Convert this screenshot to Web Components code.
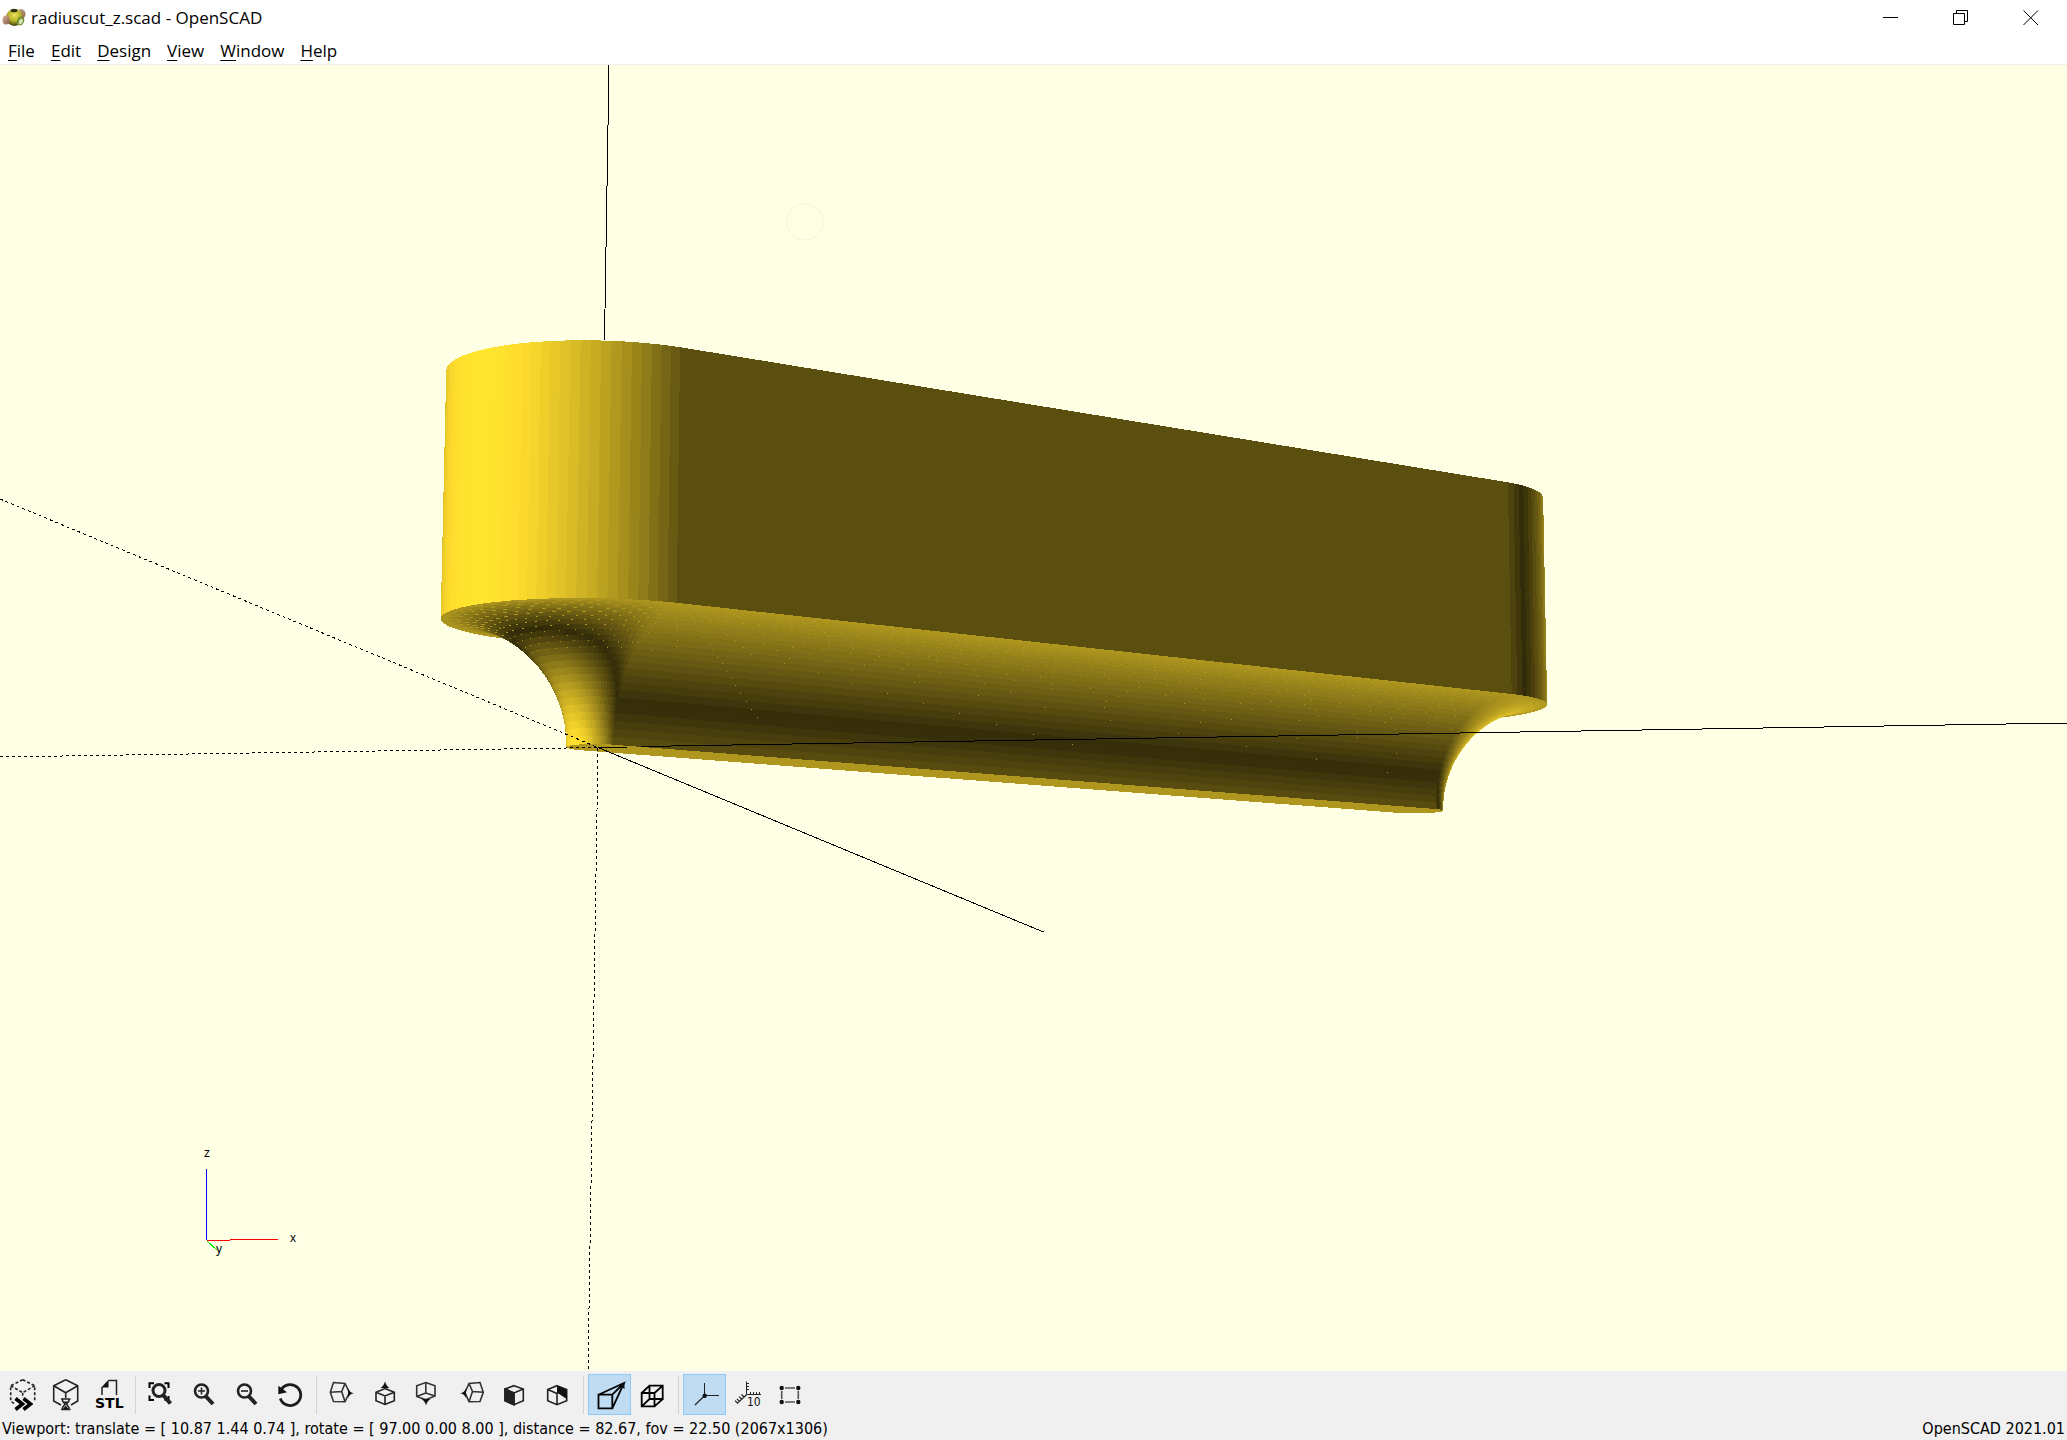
<!DOCTYPE html>
<html lang="en">
<head>
<meta charset="utf-8">
<title>radiuscut_z.scad - OpenSCAD</title>
<style>
html, body { margin: 0; height: 100%; overflow: hidden; background: #fff; }
</style>
</head>
<body>
<scad-window></scad-window>

<template id="t-window">
<style>
:host { display: flex; flex-direction: column; height: 100%; background: #fff; color: #000; }
scad-viewport { flex: 1 1 0; min-height: 0; }
</style>
<title-bar>radiuscut_z.scad - OpenSCAD</title-bar>
<menu-bar></menu-bar>
<scad-viewport></scad-viewport>
<tool-bar></tool-bar>
<status-bar>Viewport: translate = [ 10.87 1.44 0.74 ], rotate = [ 97.00 0.00 8.00 ], distance = 82.67, fov = 22.50 (2067x1306)<span slot="end">OpenSCAD 2021.01</span></status-bar>
</template>

<template id="t-title">
<style>
:host { display: flex; align-items: center; height: 35px; font: 17px/24px "Open Sans", "Noto Sans", sans-serif; }
.logo { width: 24px; height: 22px; margin: 0 5px 0 2px; }
.name { flex: 1; }
.ctl { display: flex; padding-right: 1px; }
button { width: 70px; height: 34px; border: 0; padding: 0; background: none; display: grid; place-items: center; }
button svg { width: 16px; height: 16px; fill: none; stroke: #000; }
</style>
<svg class="logo" viewBox="0 0 24 22" aria-hidden="true">
  <defs>
    <radialGradient id="b" cx=".5" cy=".35" r=".65"><stop offset="0" stop-color="#e6e25a"/><stop offset=".55" stop-color="#b9b42c"/><stop offset="1" stop-color="#3c3c10"/></radialGradient>
    <linearGradient id="p" x2="1" y2="1"><stop offset="0" stop-color="#d8b49c"/><stop offset="1" stop-color="#8a5f4c"/></linearGradient>
  </defs>
  <ellipse cx="19" cy="7" rx="4.500" ry="5" fill="url(#p)"/>
  <circle cx="12.500" cy="10.500" r="8.500" fill="url(#b)"/>
  <ellipse cx="12" cy="3.500" rx="3.500" ry="1.800" fill="#2f350f"/>
  <ellipse cx="18.500" cy="14" rx="3.500" ry="4.500" fill="#6f9136" transform="rotate(25 18.500 14)"/>
  <ellipse cx="18.800" cy="14.500" rx="1.800" ry="2.800" fill="#dce6b0" transform="rotate(25 18.800 14.500)"/>
  <ellipse cx="4" cy="13" rx="3.500" ry="4.500" fill="url(#p)"/>
</svg>
<span class="name"><slot></slot></span>
<div class="ctl">
  <button aria-label="Minimize"><svg viewBox="0 0 16 16"><path d="M0 7.500H15"/></svg></button>
  <button aria-label="Restore"><svg viewBox="0 0 16 16"><path d="M.5 3.500H11.500V14.500H.5ZM3.500 3.500V.5H14.500V11.500H11.500"/></svg></button>
  <button aria-label="Close"><svg viewBox="0 0 16 16"><path d="M.5.5L15 15M15 .5L.5 15"/></svg></button>
</div>
</template>

<template id="t-menu">
<style>
:host { display: flex; height: 29px; border-bottom: 1px solid #f0f0f0; font: 17px/32px "Open Sans", "Noto Sans", sans-serif; }
nav { display: flex; }
button { border: 0; background: none; padding: 0 8px; font: inherit; line-height: 32px; height: 32px; color: inherit; }
u { text-underline-offset: 3px; text-decoration-thickness: 1px; }
</style>
<nav>
  <button><u>F</u>ile</button><button><u>E</u>dit</button><button><u>D</u>esign</button><button><u>V</u>iew</button><button><u>W</u>indow</button><button><u>H</u>elp</button>
</nav>
</template>

<template id="t-viewport">
<style>
:host { display: block; background: #ffffe5; overflow: hidden; }
svg { display: block; width: 100%; height: 100%; }
.axis { stroke: #000; stroke-width: 1; fill: none; }
.neg { stroke-dasharray: 3 3; }
text { font: 12px "Liberation Sans", sans-serif; }
</style>
<svg viewBox="0 65 2067 1306" preserveAspectRatio="xMidYMid slice" shape-rendering="crispEdges" role="img" aria-label="3D view">
  <circle cx="805" cy="222" r="18" fill="none" stroke="#f4f4da" shape-rendering="auto"/>
  <g id="model"></g>
  <path class="axis" d="M609 65L604.500 340M598 747.500L627 747.400M641 746.500L2067 723M598 747.500L1043.500 932"/>
  <path class="axis neg" d="M0 757L598 747.500M0 499L598 747.500M598 748L588 1371"/>
  <g fill="none">
    <path stroke="#00f" d="M206.500 1240V1169"/>
    <path stroke="#f00" d="M207 1240.500H230M230 1239.500H278"/>
    <path stroke="#0e0" d="M207 1241L217 1250"/>
  </g>
  <text x="204" y="1157">z</text>
  <text x="290" y="1242">x</text>
  <text x="216" y="1253">y</text>
</svg>
</template>

<template id="t-toolbar">
<style>
:host { display: flex; height: 47px; padding-left: 2px; box-sizing: border-box; align-items: center; background: #f0f0f0; }
hr { width: 1px; height: 38px; margin: 0 4px; border: 0; background: #d2d2d2; }
</style>
<tool-button label="Preview" icon="preview"></tool-button>
<tool-button label="Render" icon="render"></tool-button>
<tool-button label="Export as STL" icon="stl"></tool-button>
<hr>
<tool-button label="View All" icon="viewall"></tool-button>
<tool-button label="Zoom In" icon="zoomin"></tool-button>
<tool-button label="Zoom Out" icon="zoomout"></tool-button>
<tool-button label="Reset View" icon="reset"></tool-button>
<hr>
<tool-button label="Right" icon="right"></tool-button>
<tool-button label="Top" icon="top"></tool-button>
<tool-button label="Bottom" icon="bottom"></tool-button>
<tool-button label="Left" icon="left"></tool-button>
<tool-button label="Front" icon="front"></tool-button>
<tool-button label="Back" icon="back"></tool-button>
<hr>
<tool-button label="Perspective" icon="persp" checked></tool-button>
<tool-button label="Orthogonal" icon="ortho"></tool-button>
<hr>
<tool-button label="Show Axes" icon="axes" checked></tool-button>
<tool-button label="Show Scale Markers" icon="scale"></tool-button>
<tool-button label="Show Edges" icon="edges"></tool-button>
</template>

<template id="t-toolbutton">
<style>
:host { display: block; width: 43px; height: 41px; }
button { display: block; width: 100%; height: 100%; padding: 0; border: 0; background: none; }
:host([checked]) button { background: #c0dcf3; box-shadow: inset 0 0 0 1px #90c8f6; }
svg { display: block; width: 43px; height: 41px; fill: none; stroke: #222; stroke-width: 1.600; }
.k { fill: #111; stroke: none; }
.b { font: bold 14px "DejaVu Sans", sans-serif; fill: #000; stroke: none; }
.n { font: 12px "DejaVu Sans Condensed", "DejaVu Sans", sans-serif; fill: #111; stroke: none; }
</style>
<button><svg viewBox="0 0 43 41" aria-hidden="true"></svg></button>
</template>

<template id="t-status">
<style>
:host { display: flex; justify-content: space-between; height: 22px; background: #f0f0f0; font: 16px/22px "DejaVu Sans Condensed", "DejaVu Sans", sans-serif; padding: 0 2px; white-space: nowrap; }
</style>
<span><slot></slot></span><span><slot name="end"></slot></span>
</template>

<script>
const icons = {
  preview: `<path stroke-dasharray="3 2" d="M20.700 5.700L32.700 11.700V27.300M20.700 5.700L8.700 11.700V27.300L13 30M8.700 11.700L20.700 18.700L32.700 11.700M20.700 18.700V24"/><path stroke="#000" stroke-width="3.600" d="M13.500 24.500L20.500 30L13.500 35.500M21.500 24.500L28.500 30L21.500 35.500"/>`,
  render: `<path d="M20.700 5.700L32.700 11.700V27L26 31M16 31L8.700 27V11.700L20.700 5.700M8.700 11.700L20.700 18.700L32.700 11.700M20.700 18.700V24"/><path stroke-width="1.500" d="M16 25H25.500M16 35.500H25.500M17.500 25V27L20 30.200L17.500 33.500V35.500M24 25V27L21.500 30.200L24 33.500V35.500"/><path class="k" d="M18.500 27.500H23L20.700 30ZM18 35L20.700 31.500L23.500 35Z"/>`,
  stl: `<path stroke-width="1.500" d="M20.300 6.500H28.500V21M14 21V13"/><path class="k" d="M13.300 13.500L20.500 5.800V13.500Z"/><text class="b" x="7" y="34">STL</text>`,
  viewall: `<path stroke="#000" stroke-width="2" d="M9.500 14V9.300H14M24.500 9.300H28.500V14M9.500 21.500V26H14M24.500 26H28.500V22"/><circle cx="19" cy="16.500" r="6" stroke-width="3"/><path stroke-width="4" d="M23.500 21.500L30.500 29.500"/>`,
  zoomin: `<circle cx="18.500" cy="17" r="6.500" stroke-width="2.600"/><path stroke-width="1.600" d="M15 17H22M18.500 13.500V20.500"/><path stroke-width="4" d="M23 22.500L30 30"/>`,
  zoomout: `<circle cx="18.500" cy="17" r="6.500" stroke-width="2.600"/><path stroke-width="1.600" d="M15 17H22"/><path stroke-width="4" d="M23 22.500L30 30"/>`,
  reset: `<path stroke="#1c1c1c" stroke-width="2.800" d="M12.500 15.200A10.500 10.500 0 1 1 11.300 24.500"/><path class="k" d="M9.300 11.800V20.200L18 18.300Z"/>`,
  right: `<path stroke="#333" d="M12.500 8.500L24 9.500L28.500 18.500L24 27.700L12.500 27.500L9.300 18.300ZM9.300 18.300L20.700 17.500L24 9.500M20.700 17.500L24 27.700"/><path class="k" d="M27 14.500Q28.500 18.500 33 19.300Q28.500 20 27 24Z"/>`,
  top: `<path d="M21 14.500L30.300 18.300V26.700L21 30.500L12 26.700V18.300ZM12 18.300L21 22L30.300 18.300M21 22V30.500"/><path class="k" d="M21 7.300Q22 12 25.500 14H16.500Q20 12 21 7.300Z"/>`,
  bottom: `<path stroke="#333" d="M18.800 8.500L28 11.700V22L18.800 25.700L9.700 22.500V11.700ZM18.800 8.500V19L9.700 22.500M18.800 19L28 22"/><path class="k" d="M14.500 25H23.500Q20 27 19 31.500Q18 27 14.500 25Z"/>`,
  left: `<path stroke="#333" d="M30 8.500L19 9.500L15 18.500L19 27.700L30 27.500L33.300 18.300ZM33.300 18.300L22.500 17.500L19 9.500M22.500 17.500L19 27.700"/><path class="k" d="M16 14.500Q14.500 18.500 10 19.300Q14.500 20 16 24Z"/>`,
  front: `<path d="M21 11.700L30.300 15V26.700L21 30.700L12 26.700V15ZM12 15L21 19L30.300 15M21 19V30.700"/><path fill="#222" d="M12 15L21 19V30.700L12 26.700Z"/>`,
  back: `<path d="M21 11.700L30.700 15.500V26.700L21 30.700L11.700 26.700V15.500ZM11.700 15.500L21 19.500V30.700M21 19.500L24 18"/><path class="k" d="M21 11.700L30.700 15.500V25L21 18.500Z"/>`,
  persp: `<path stroke="#000" stroke-width="1.800" d="M10.500 20.700H24.300V34.300H10.500ZM10.500 20.700L36 9L24.300 34.300M24.300 20.700L35.500 9.500"/><path class="k" d="M36.500 8V15L32 12Z"/>`,
  ortho: `<path stroke="#000" stroke-width="1.800" d="M10.700 19H23.500V32.300H10.700ZM18.500 11.700H31.700V25H18.500ZM10.700 19L18.500 11.700M23.500 19L31.700 11.700M23.500 32.300L31.700 25M10.700 32.300L18.500 25"/>`,
  axes: `<path stroke-width="1" shape-rendering="crispEdges" d="M21.500 9V21.500H36"/><path stroke-width="1.200" d="M21.500 21.700L12 31"/><circle class="k" cx="21.700" cy="21.700" r="2.200"/>`,
  scale: `<path stroke-width="1" d="M20.500 7.500V20.500H35M20.500 9.500H23M20.500 12.500H23M20.500 15.500H23M24.500 20.500V18M27.500 20.500V18M30.500 20.500V18M33.500 20.500V18"/><path stroke-width="1.200" d="M20.500 20.700L11 29.500M18 23L15.500 20.500M15.700 25.200L13.200 22.700M13.400 27.400L10.900 24.900M11.500 29.200L9 26.700"/><text class="n" x="21" y="32">10</text>`,
  edges: `<path stroke="#555" stroke-width="1.600" d="M16 14H26M16 28H26M12.700 17V25M29.300 17V25"/><g class="k"><circle cx="12.700" cy="14" r="2.200"/><circle cx="29.300" cy="14" r="2.200"/><circle cx="12.700" cy="28" r="2.200"/><circle cx="29.300" cy="28" r="2.200"/></g>`
};

function fromTemplate(id) {
  return class extends HTMLElement {
    constructor() {
      super();
      this.attachShadow({ mode: 'open' }).append(document.getElementById(id).content.cloneNode(true));
    }
  };
}

/* Camera: translate, rotate, distance and field of view as the status bar shows them. */
const rad = Math.PI / 180;
const cam = { t: [10.87, 1.44, 0.74], rx: -7 * rad, rz: -8 * rad, d: 82.67, f: 653 / Math.tan(11.25 * rad) };
function rotate([x, y, z]) {
  const c = Math.cos(cam.rz), s = Math.sin(cam.rz), a = x * c - y * s, b = x * s + y * c;
  const C = Math.cos(cam.rx), S = Math.sin(cam.rx);
  return [a, b * C - z * S, b * S + z * C];
}
function project(p) {
  const q = rotate([p[0] - cam.t[0], p[1] - cam.t[1], p[2] - cam.t[2]]);
  const k = cam.f / (q[1] + cam.d);
  return [1033.5 + q[0] * k, 718 - q[2] * k];
}
function shade(n) {
  const q = rotate(n), e = [q[0], q[2], -q[1]], r = Math.sqrt(3);
  const i = 0.2 + Math.max(0, (-e[0] + e[1] + e[2]) / r) + Math.max(0, (e[0] - e[1] - e[2]) / r);
  return 'rgb(' + [249, 215, 44].map(c => Math.min(255, Math.round(c * i))).join() + ')';
}

/* Slot-shaped solid: hull of two round posts, with a concave quarter-round under the wall. */
function buildModel() {
  const R = 3.175, r0 = R / 4, rOut = r0 + R, top = 3 * R, step = 3.6, rings = 25;
  const verts = [];
  for (let k = -12; k <= 37; k++) verts.push([20, 20, k * step * rad]);
  for (let k = 38; k <= 87; k++) verts.push([0, 0, k * step * rad]);
  const N = verts.length;
  const pt = (i, r, z) => { const v = verts[i % N]; return [v[0] + r * Math.cos(v[2]), v[1] + r * Math.sin(v[2]), z]; };
  const normal = i => {
    const a = pt(i, 4, 0), b = pt(i + 1, 4, 0), dx = b[0] - a[0], dy = b[1] - a[1], l = Math.hypot(dx, dy);
    return [dy / l, -dx / l];
  };
  const out = [];
  const poly = (pts, fill) => out.push(`<polygon points="${pts.map(p => p[0].toFixed(1) + ' ' + p[1].toFixed(1)).join(' ')}" fill="${fill}"/>`);
  const quad = (pts, n) => {
    const s = pts.map(project);
    let area = 0;
    s.forEach((p, i) => { const q = s[(i + 1) % s.length]; area += p[0] * q[1] - q[0] * p[1]; });
    if (area < 0) poly(s, shade(n));
  };
  const order = [...Array(N).keys()].sort((a, b) => rotate([...normal(b), 0])[1] - rotate([...normal(a), 0])[1]);
  for (const i of order) {
    const n = normal(i);
    quad([pt(i, rOut, R), pt(i + 1, rOut, R), pt(i + 1, rOut, top), pt(i, rOut, top)], [n[0], n[1], 0]);
  }
  const half = [order.filter(i => rotate([...normal(i), 0])[1] >= 0), order.filter(i => rotate([...normal(i), 0])[1] < 0)];
  const prof = j => { const t = j * 90 / rings * rad; return [r0 + R * (1 - Math.cos(t)), R * Math.sin(t)]; };
  for (const part of half)
    for (let j = rings - 1; j >= 0; j--)
      for (const i of part) {
        const [ra, za] = prof(j), [rb, zb] = prof(j + 1), t = (j + 0.5) * 90 / rings * rad, n = normal(i);
        quad([pt(i, ra, za), pt(i + 1, ra, za), pt(i + 1, rb, zb), pt(i, rb, zb)],
          [n[0] * Math.cos(t), n[1] * Math.cos(t), -Math.sin(t)]);
      }
  /* sparkle along the ring seams */
  let d = '';
  const dot = (p, w) => { d += `M${Math.round(p[0])} ${Math.round(p[1])}h${w}v1h-${w}z`; };
  for (let j = rings - 1; j > 4; j--) {
    const [r, z] = prof(j), m = rings - j;
    const a = project(pt(N - 1, r, z)), b = project(pt(0, r, z));
    const gap = 11 + m * m * 0.22 + (m > 11 ? (m - 11) * 24 : 0);
    for (let x = a[0] + (m * 7) % gap; x < b[0]; x += gap)
      dot([x, a[1] + (b[1] - a[1]) * (x - a[0]) / (b[0] - a[0])], m < 6 ? 2 : 1);
    if (j > 12) for (let i = 60 + m; i < 99; i += m < 8 ? 2 : 3) dot(project(pt(i, r, z)), m < 6 ? 4 : m < 9 ? 2 : 1);
  }
  out.push(`<path d="${d}" fill="#af961e"/>`);
  poly(verts.map((v, i) => project(pt(i, r0, 0))), shade([0, 0, -1]));
  return out.join('');
}

customElements.define('title-bar', fromTemplate('t-title'));
customElements.define('menu-bar', fromTemplate('t-menu'));
customElements.define('status-bar', fromTemplate('t-status'));
customElements.define('scad-viewport', class extends fromTemplate('t-viewport') {
  connectedCallback() { this.shadowRoot.getElementById('model').innerHTML = buildModel(); }
});
customElements.define('tool-button', class extends fromTemplate('t-toolbutton') {
  connectedCallback() {
    const b = this.shadowRoot.querySelector('button');
    b.setAttribute('aria-label', this.getAttribute('label'));
    if (this.hasAttribute('checked')) b.setAttribute('aria-pressed', 'true');
    b.firstElementChild.innerHTML = icons[this.getAttribute('icon')];
  }
});
customElements.define('tool-bar', fromTemplate('t-toolbar'));
customElements.define('scad-window', fromTemplate('t-window'));
</script>
</body>
</html>
